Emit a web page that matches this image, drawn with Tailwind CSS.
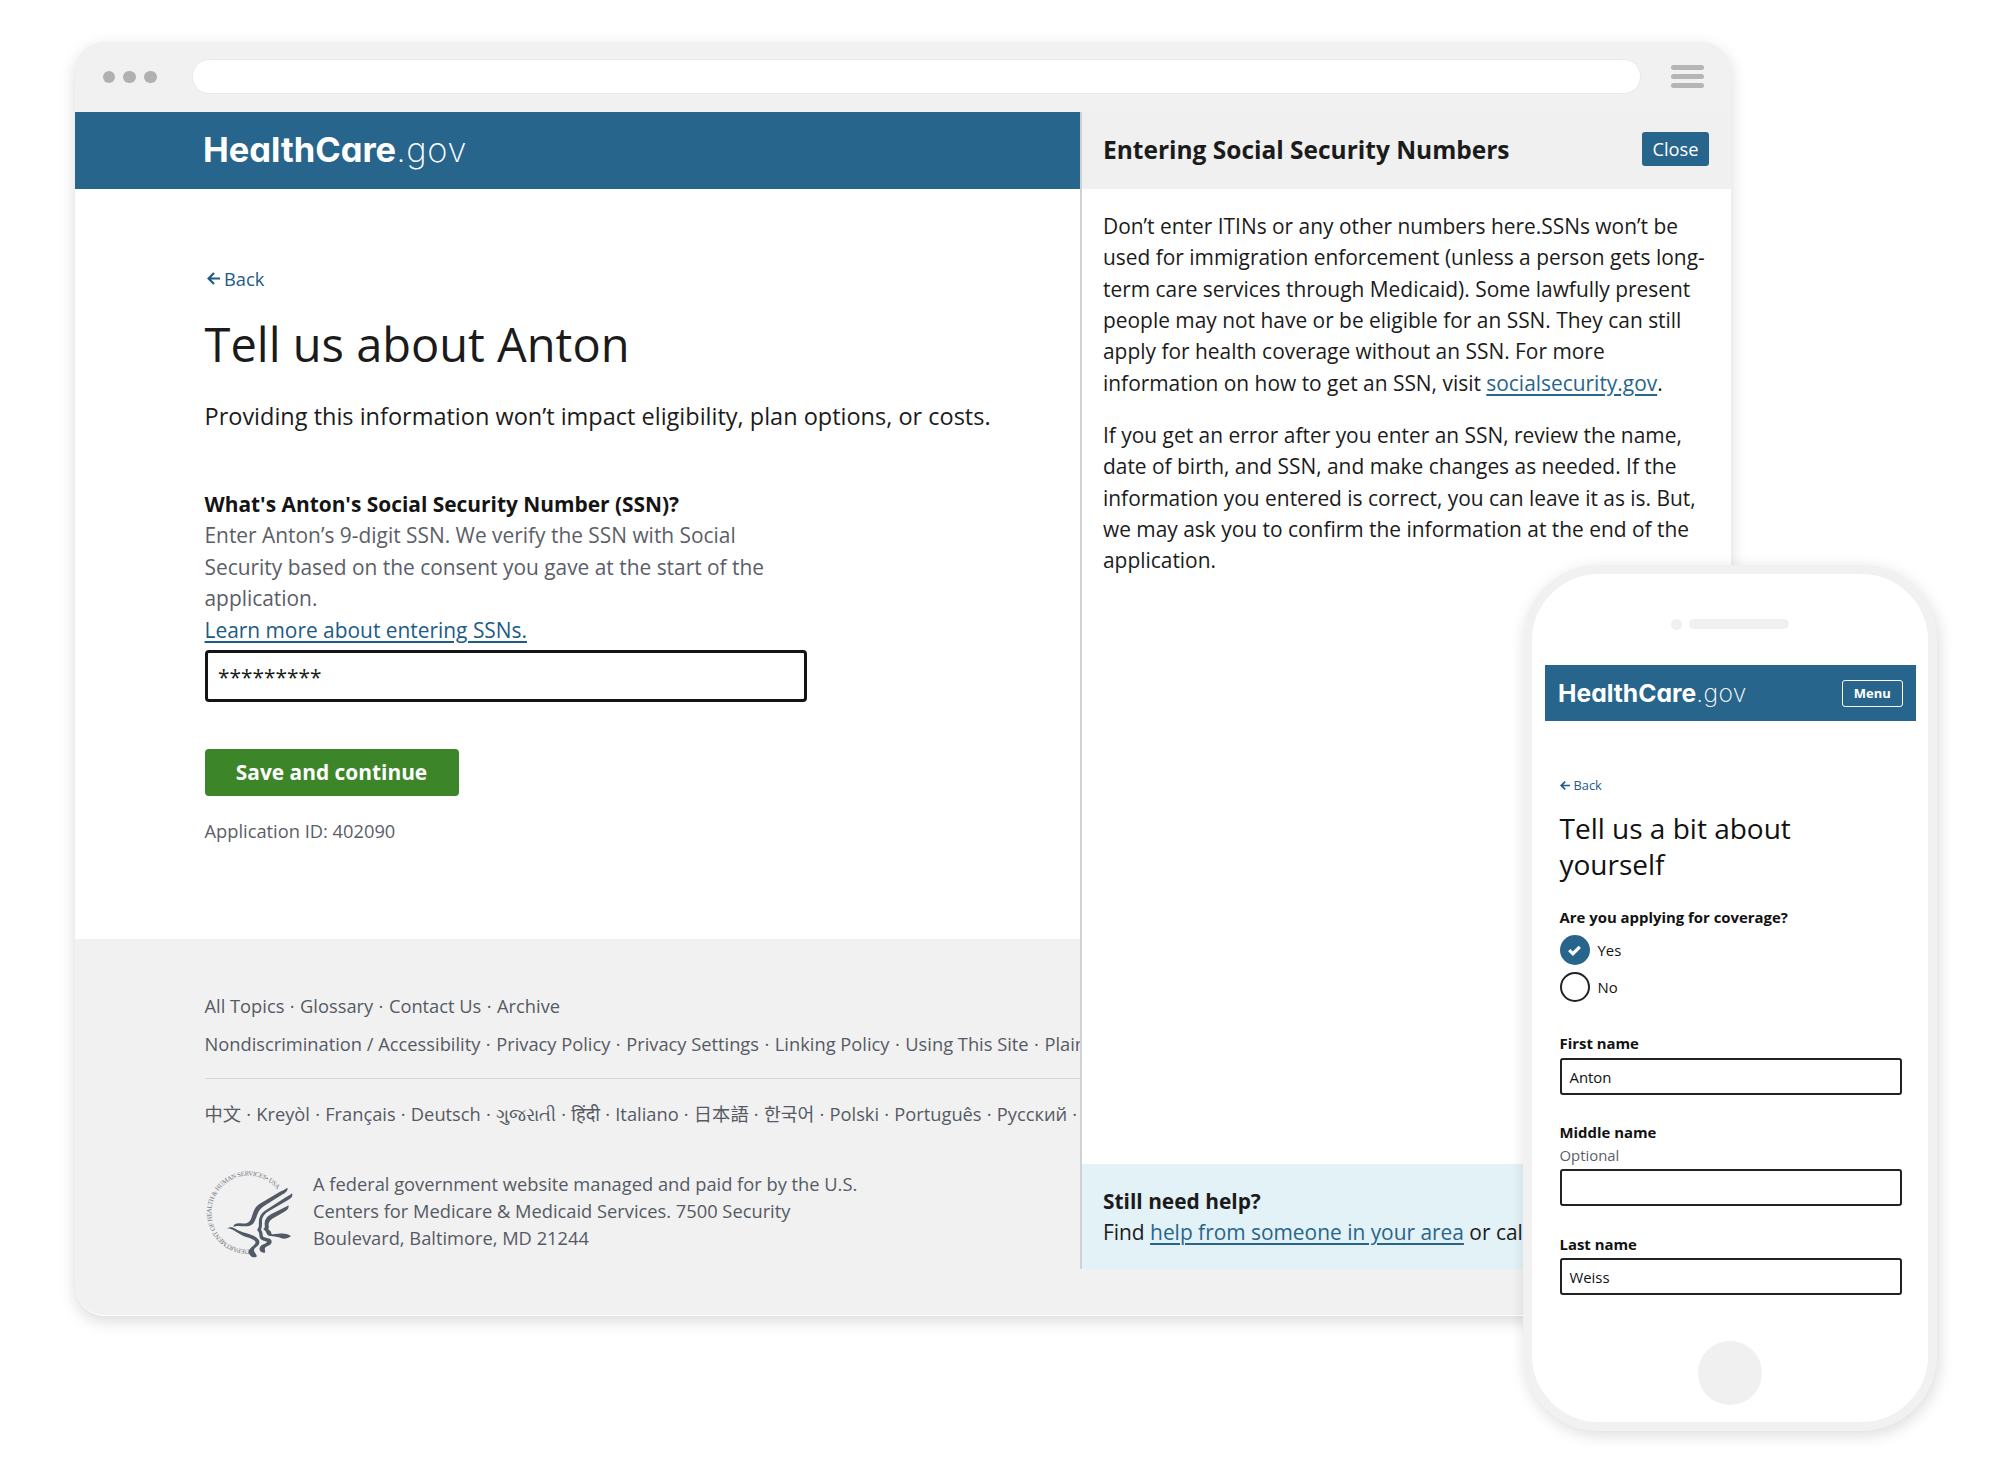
<!DOCTYPE html>
<html lang="en">
<head>
<meta charset="utf-8">
<title>HealthCare.gov</title>
<script src="https://cdn.jsdelivr.net/npm/@tailwindcss/browser@4"></script>
</head>
<body class="bg-white">
<div class="relative h-[1473px] w-[2000px] overflow-hidden bg-white pt-[42px] pl-[75px] font-['Open_Sans','Noto_Sans','Noto_Sans_CJK_SC',sans-serif] text-[#1b1b1b]">

  <!-- Browser window -->
  <div class="h-[1274px] w-[1655.5px] overflow-hidden rounded-[30px] border-b border-white bg-[#f1f1f1] shadow-[0_5px_16px_rgba(0,0,0,0.15)]">
    <div class="flex h-[70px] items-center">
      <div class="ml-[27.5px] flex gap-[8px]">
        <span class="size-[12.7px] rounded-full bg-[#b1b1b1]"></span>
        <span class="size-[12.7px] rounded-full bg-[#b1b1b1]"></span>
        <span class="size-[12.7px] rounded-full bg-[#b1b1b1]"></span>
      </div>
      <div class="mt-[-1px] ml-[35px] h-[35px] w-[1449px] shrink-0 rounded-full border border-[#e9e9e9] bg-white"></div>
      <div class="mt-[-1px] ml-[30px] flex w-[33px] shrink-0 flex-col gap-[4px]">
        <span class="h-[5px] rounded-full bg-[#b5b5b5]"></span>
        <span class="h-[5px] rounded-full bg-[#b5b5b5]"></span>
        <span class="h-[5px] rounded-full bg-[#b5b5b5]"></span>
      </div>
    </div>

    <div class="flex">
      <!-- Main column -->
      <div class="w-[1005px] shrink-0 overflow-hidden whitespace-nowrap">
        <header class="flex h-[77px] items-center bg-[#28658c] pl-[128px]">
          <div class="font-['Inter',sans-serif] text-[34.5px] leading-none text-white [font-feature-settings:'cv11']"><span class="font-bold">HealthCare</span><span class="font-extralight tracking-[0.6px]">.gov</span></div>
        </header>
        <main class="h-[750px] bg-white pt-[76px] pl-[129.5px]">
          <a class="flex h-[27.5px] items-center gap-[4.5px] pl-[2px] text-[18.3px] leading-[27.5px] text-[#205b87]">
            <svg class="h-[13px] w-[13px]" viewBox="0 0 13 13" fill="none" stroke="currentColor" stroke-width="2.2"><path d="M7 1 1.6 6.5 7 12M1.8 6.5H13"/></svg>
            <span>Back</span>
          </a>
          <h1 class="mt-[21px] text-[47px] leading-[60px]">Tell us about Anton</h1>
          <p class="mt-[25px] text-[23.5px] leading-[35px]">Providing this information won’t impact eligibility, plan options, or costs.</p>
          <div class="mt-[55.5px] text-[20.9px] leading-[31.4px] text-[#5b5e68]">
            <div class="font-bold text-[#141414]">What's Anton's Social Security Number (SSN)?</div>
            <div>Enter Anton’s 9-digit SSN. We verify the SSN with Social<br>Security based on the consent you gave at the start of the<br>application.</div>
            <a class="text-[#205b87] underline underline-offset-[3px]">Learn more about entering SSNs.</a>
          </div>
          <div class="mt-[4px] h-[52.4px] w-[602px] rounded-[4px] border-[3px] border-[#141414] pl-[10.5px] text-[20.9px] leading-[48px]">*********</div>
          <div class="mt-[47px] flex h-[47px] w-[254px] items-center justify-center rounded-[4px] bg-[#3d8529] text-[20.9px] font-bold text-white">Save and continue</div>
          <div class="mt-[20.6px] text-[18.3px] leading-[27.5px] text-[#5b5e68]">Application ID: 402090</div>
        </main>
        <footer class="pt-[53px] pl-[129.5px] text-[18.3px] leading-[27.5px] text-[#555a64]">
          <div>All Topics<span class="px-[0.7px]"> · </span>Glossary<span class="px-[0.7px]"> · </span>Contact Us<span class="px-[0.7px]"> · </span>Archive</div>
          <div class="mt-[10.5px]">Nondiscrimination / Accessibility<span class="px-[0.75px]"> · </span>Privacy Policy<span class="px-[0.75px]"> · </span>Privacy Settings<span class="px-[0.75px]"> · </span>Linking Policy<span class="px-[0.75px]"> · </span>Using This Site<span class="px-[0.75px]"> · </span>Plain Writing</div>
          <div class="mt-[20px] h-[1.5px] bg-[#d6d7d9]"></div>
          <div class="mt-[21px] h-[27.5px]">中文<span class="px-[0.45px]"> · </span>Kreyòl<span class="px-[0.45px]"> · </span>Français<span class="px-[0.45px]"> · </span>Deutsch<span class="px-[0.45px]"> · </span>ગુજરાતી<span class="px-[0.45px]"> · </span>हिंदी<span class="px-[0.45px]"> · </span>Italiano<span class="px-[0.45px]"> · </span>日本語<span class="px-[0.45px]"> · </span>한국어<span class="px-[0.45px]"> · </span>Polski<span class="px-[0.45px]"> · </span>Português<span class="px-[0.45px]"> · </span>Русский<span class="px-[0.45px]"> · </span></div>
          <div class="mt-[42px] flex">
            <svg class="h-[89px] w-[89px] shrink-0" viewBox="45 57 267 267">
              <defs><path id="ring" d="M178 296A111 111 0 1 1 286 185"/></defs>
              <text class="font-['Liberation_Serif',serif] text-[20px]" fill="#70757f"><textPath href="#ring" textLength="451">DEPARTMENT OF HEALTH &amp; HUMAN SERVICES• USA</textPath></text>
              <g fill="#515a66">
                <path d="M292 110c3 8-4 14-14 20l-57 36c-14 9-17 20-22 33-7 20-14 27-33 27-14 0-25-4-36 2 1-10 10-12 22-11 19 2 26-1 32-16 7-20 9-32 24-42l62-37c9-5 17-7 22-12z"/>
                <path d="M306 127c4 9-3 15-13 21l-57 33c-13 8-20 17-20 30 0 11 1 15-3 25 8 10 2 20 10 23 10 3 22 3 22 13 0 12-17 12-20 19-2 6 2 9 0 14-10 0-19-6-16-15 4-11 20-11 22-18-8-2-20-4-22-13-2-8 1-14-8-22 9-10 4-16 6-29 2-17 12-26 27-35l50-32c9-6 17-8 22-14z"/>
                <path d="M295 163c3 9-3 15-13 20l-30 17c-12 7-17 13-16 24 2 9-5 9 4 15 6 4 2 10 8 11 12 0 25-3 35-2 9 1 14 3 20 7-10 8-21 10-31 6-14-6-24-4-33-6-11-2-7-12-19-20 7-7 4-10 4-17 0-14 8-22 20-29l32-16c8-4 14-6 19-10z"/>
                <path d="M111 232c10-5 17-4 26 2 18 12 44 12 63 26 13 10 9 20 0 27-9 6-10 10-6 17 3 5 7 8 6 13-11 6-22-2-24-13-1-14 20-19 21-31-6-11-25-12-41-20-18-9-24-19-45-21z"/>
              </g>
            </svg>
            <div class="ml-[19.5px] leading-[27.4px]">A federal government website managed and paid for by the U.S.<br>Centers for Medicare &amp; Medicaid Services. 7500 Security<br>Boulevard, Baltimore, MD 21244</div>
          </div>
        </footer>
      </div>

      <!-- Help drawer -->
      <aside class="flex h-[1156.5px] w-[651px] shrink-0 flex-col border-l-2 border-[#d0d1d3] bg-white">
        <div class="flex h-[77px] shrink-0 items-center justify-between bg-[#f0f0f0] pr-[22px] pl-[21px]">
          <h2 class="text-[24.5px] font-bold tracking-[-0.01px]">Entering Social Security Numbers</h2>
          <div class="mt-[-3px] flex h-[34px] w-[67px] items-center justify-center rounded-[3px] bg-[#28658c] text-[18.3px] text-white">Close</div>
        </div>
        <div class="grow pt-[22px] pl-[21px] text-[20.92px] leading-[31.35px] whitespace-nowrap">
          <p>Don’t enter ITINs or any other numbers here.SSNs won’t be<br>used for immigration enforcement (unless a person gets long-<br>term care services through Medicaid). Some lawfully present<br>people may not have or be eligible for an SSN. They can still<br>apply for health coverage without an SSN. For more<br>information on how to get an SSN, visit <a class="text-[#28658c] underline underline-offset-[3px]">socialsecurity.gov</a>.</p>
          <p class="mt-[21px]">If you get an error after you enter an SSN, review the name,<br>date of birth, and SSN, and make changes as needed. If the<br>information you entered is correct, you can leave it as is. But,<br>we may ask you to confirm the information at the end of the<br>application.</p>
        </div>
        <div class="h-[104.5px] shrink-0 bg-[#e2f2f6] pt-[21.5px] pl-[21px] text-[20.9px] leading-[31.5px]">
          <div class="font-bold">Still need help?</div>
          <div>Find <a class="text-[#28658c] underline underline-offset-[3px]">help from someone in your area</a> or call us</div>
        </div>
      </aside>
    </div>
  </div>

  <!-- Phone -->
  <div class="absolute top-[565px] left-[1523px] h-[866px] w-[414px] rounded-[76px] border-[9.5px] border-[#f1f1f1] bg-white px-[12.5px] shadow-[2px_4px_16px_rgba(0,0,0,0.14)]">
    <div class="flex h-[91px] items-center justify-center gap-[6.5px]">
      <span class="mt-[9px] size-[11px] rounded-full bg-[#f0f0f0]"></span>
      <span class="mt-[9px] h-[9.5px] w-[100px] rounded-full bg-[#f0f0f0]"></span>
    </div>
    <div class="flex h-[56px] items-center justify-between bg-[#28658c] pr-[13px] pl-[13.5px]">
      <div class="mt-[1px] font-['Inter',sans-serif] text-[24.7px] leading-none text-white [font-feature-settings:'cv11']"><span class="font-bold">HealthCare</span><span class="font-extralight tracking-[0.4px]">.gov</span></div>
      <div class="mt-[1px] flex h-[27px] w-[60.5px] items-center justify-center rounded-[3px] border border-white text-[13px] font-bold text-white">Menu</div>
    </div>
    <div class="pr-[13.5px] pl-[15px] text-[14.9px] leading-[20px] whitespace-nowrap text-[#111]">
      <a class="mt-[54px] flex h-[20px] items-center gap-[4px] text-[12.8px] text-[#205b87]">
        <svg class="h-[9px] w-[10px]" viewBox="0 0 10 9" fill="none" stroke="currentColor" stroke-width="1.7"><path d="M5.2.6 1.2 4.5l4 3.9M1.4 4.5H10"/></svg>
        <span>Back</span>
      </a>
      <h2 class="mt-[15px] text-[28px] leading-[36.4px]">Tell us a bit about<br>yourself</h2>
      <div class="mt-[24px] font-bold">Are you applying for coverage?</div>
      <div class="mt-[8.5px] flex h-[30px] items-center gap-[8px]">
        <span class="flex size-[30px] items-center justify-center rounded-full bg-[#28658c]">
          <svg class="h-[11px] w-[13px]" viewBox="0 0 13 11" fill="none" stroke="#fff" stroke-width="3.2"><path d="M1.2 5.2 4.9 8.7 11.8 1.8"/></svg>
        </span>
        <span>Yes</span>
      </div>
      <div class="mt-[7px] flex h-[30px] items-center gap-[8px]">
        <span class="size-[30px] rounded-full border-2 border-[#222]"></span>
        <span>No</span>
      </div>
      <div class="mt-[30.5px] font-bold">First name</div>
      <div class="mt-[5px] h-[37px] rounded-[3px] border-2 border-[#222] pl-[8px] leading-[35px]">Anton</div>
      <div class="mt-[27.3px] font-bold">Middle name</div>
      <div class="mt-[2.5px] text-[#5b5e68]">Optional</div>
      <div class="mt-[4.7px] h-[37px] rounded-[3px] border-2 border-[#222]"></div>
      <div class="mt-[27.4px] font-bold">Last name</div>
      <div class="mt-[4.6px] h-[37px] rounded-[3px] border-2 border-[#222] pl-[8px] leading-[35px]">Weiss</div>
    </div>
    <div class="mx-auto mt-[45.5px] size-[64px] rounded-full bg-[#f0f0f0]"></div>
  </div>
</div>
</body>
</html>
